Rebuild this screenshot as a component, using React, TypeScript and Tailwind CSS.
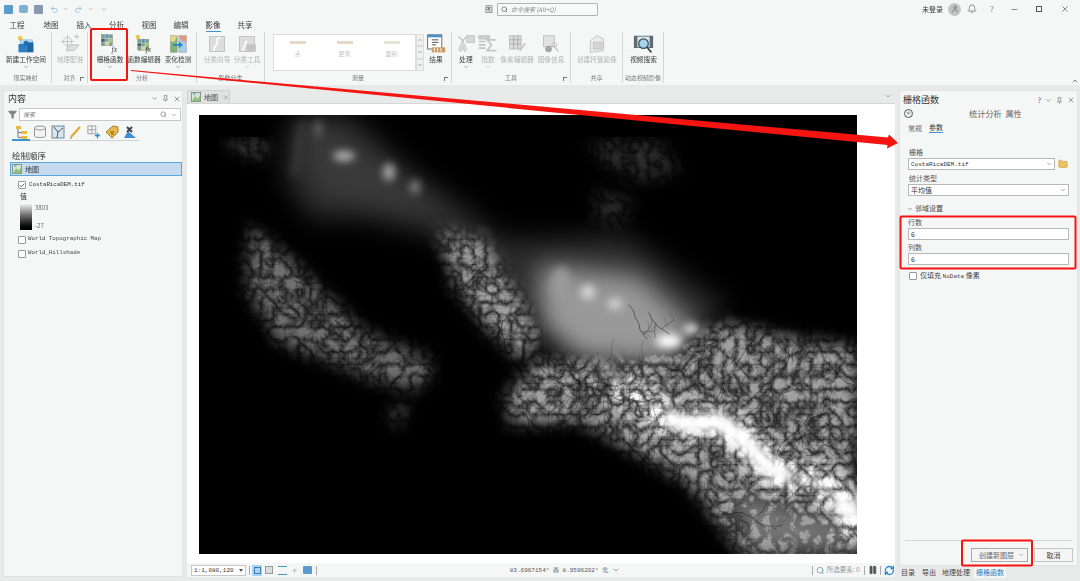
import { useMemo } from "react";
import { ChevronDown, ChevronUp, Pin, Search, X, Minus, Bell, Undo2, Redo2, Filter, Pause, RefreshCw, ArrowLeft, Check, Folder, User } from "lucide-react";

const mono = "font-['Liberation_Mono',monospace]";

// simple seeded random so the drainage lines stay the same on each render
function makeRandom(seed: number) {
  let s = seed;
  return () => {
    s = (s * 16807) % 2147483647;
    return s / 2147483647;
  };
}

function buildRivers() {
  const rnd = makeRandom(4242);
  const out: { d: string; w: number }[] = [];
  const grow = (x: number, y: number, a: number, len: number, depth: number) => {
    let cx = x;
    let cy = y;
    let ang = a;
    let d = `M${cx.toFixed(1)} ${cy.toFixed(1)}`;
    const steps = Math.max(3, Math.round(len / 3));
    for (let i = 0; i < steps; i++) {
      ang += (rnd() - 0.5) * 0.8;
      cx += Math.cos(ang) * 3;
      cy += Math.sin(ang) * 3;
      d += `L${cx.toFixed(1)} ${cy.toFixed(1)}`;
      if (depth > 0 && rnd() < 0.3) {
        const side = rnd() < 0.5 ? -1 : 1;
        grow(cx, cy, ang + side * (0.6 + rnd() * 0.6), len * (0.3 + rnd() * 0.25), depth - 1);
      }
    }
    out.push({ d, w: 0.3 + depth * 0.25 });
  };
  const trunks: [number, number, number, number][] = [
    [655, 330, 3.0, 60], [655, 270, 3.3, 60], [590, 235, 1.9, 60], [555, 225, 1.9, 70], [520, 225, 2.3, 50],
    [425, 268, 3.1, 55], [340, 250, 1.2, 45], [375, 262, 0.8, 90], [440, 345, 0.7, 60],
    [610, 300, 2.2, 50], [515, 385, 0.9, 60], [430, 190, 1.1, 38], [450, 198, 1.3, 30],
    [310, 200, 2.5, 40], [285, 150, 2.2, 35], [95, 165, 1.0, 45], [135, 205, 0.6, 40], [320, 290, 1.4, 26],
  ];
  trunks.forEach(([x, y, a, l]) => grow(x, y, a, l, 2));
  return out;
}

function DemMap() {
  const rivers = useMemo(buildRivers, []);
  const glow: [number, number, number, number, string][] = [
    [119, 14, 4, 9, "#666"], [145, 41, 11, 5, "#bbb"], [190, 57, 6, 9, "#aaa"], [216, 72, 5, 7, "#888"],
    [286, 117, 2, 2, "#aaa"], [362, 168, 10, 16, "#999"], [389, 177, 7, 7, "#ddd"], [416, 189, 7, 5, "#ddd"],
    [470, 226, 13, 7, "#fff"], [492, 214, 8, 5, "#eee"],
  ];
  return (
    <svg viewBox="0 0 658 439" className="block w-[658px] h-[439px] bg-black">
      <defs>
        <filter id="wide" x="-20%" y="-20%" width="140%" height="140%" colorInterpolationFilters="sRGB">
          <feGaussianBlur stdDeviation="13" />
        </filter>
        <filter id="soft" x="-20%" y="-20%" width="140%" height="140%" colorInterpolationFilters="sRGB">
          <feGaussianBlur stdDeviation="4" />
        </filter>
        <filter id="dem" x="0" y="0" width="100%" height="100%" colorInterpolationFilters="sRGB">
          <feGaussianBlur stdDeviation="8" result="b" />
          <feTurbulence type="turbulence" baseFrequency="0.08" numOctaves="4" seed="23" result="n" />
          <feColorMatrix in="n" type="matrix" values="1.5 0 0 0 0.12 1.5 0 0 0 0.12 1.5 0 0 0 0.12 0 0 0 0 1" result="g" />
          <feComposite in="b" in2="g" operator="arithmetic" k1="0.95" k2="0.05" k3="0" k4="0" />
          <feGaussianBlur stdDeviation="0.4" />
        </filter>
      </defs>
      <g filter="url(#wide)">
        <polygon points="92,0 150,0 208,53 269,96 303,125 345,125 425,119 529,193 468,239 381,226 321,186 234,119 164,103 112,103 85,63" fill="#2c2c2c" />
        <polygon points="100,15 125,10 190,50 250,100 200,95 120,80" fill="#3a3a3a" />
        <polygon points="340,150 440,160 500,215 470,250 380,245 340,210" fill="#999" />
        <polygon points="510,355 565,380 658,405 658,439 552,439" fill="#777" />
      </g>
      <g filter="url(#soft)">
        <polygon points="100,4 108,10 100,60 92,60" fill="#383838" />
        {glow.map(([cx, cy, rx, ry, fill], i) => (
          <ellipse key={i} cx={cx} cy={cy} rx={rx} ry={ry} fill={fill} />
        ))}
      </g>
      <g filter="url(#dem)" style={{ mixBlendMode: "lighten" }}>
        <polygon points="52,109 91,143 164,216 234,246 225,273 182,269 78,226 47,173" fill="#707070" />
        <polygon points="20,28 50,22 75,32 60,45 40,36" fill="#484848" />
        <polygon points="385,25 465,25 480,60 440,66 405,50" fill="#2c2c2c" />
        <polygon points="395,75 440,85 420,110 395,105" fill="#282828" />
        <polygon points="190,290 212,290 200,312 192,308" fill="#484848" />
        <polygon points="240,115 285,125 325,190 342,225 320,245 290,215 255,170" fill="#a0a0a0" />
        <polygon points="308,279 340,245 425,245 529,208 598,224 658,232 658,439 545,439 490,369 385,308 310,308" fill="#a0a0a0" />
        <polyline points="420,265 468,306 520,306 550,329 576,359 620,366 650,389 658,425" fill="none" stroke="#fff" strokeWidth="34" strokeLinejoin="round" />
      </g>
      <g filter="url(#soft)" style={{ mixBlendMode: "lighten" }}>
        <polyline points="465,302 490,310 520,306 550,330 568,352 590,362" fill="none" stroke="#fff" strokeWidth="17" strokeLinejoin="round" />
        <polyline points="590,362 620,368 640,385" fill="none" stroke="#ddd" strokeWidth="6" opacity="0.8" />
        <polyline points="400,245 430,275" fill="none" stroke="#aaa" strokeWidth="8" opacity="0.7" />
        <polyline points="638,385 658,402" fill="none" stroke="#fff" strokeWidth="20" />
      </g>
      <g fill="none" stroke="#000" strokeLinecap="round" opacity="0.55">
        {rivers.map((r, i) => (
          <path key={i} d={r.d} strokeWidth={r.w} />
        ))}
      </g>
    </svg>
  );
}

function Annotations() {
  return (
    <svg viewBox="0 0 1080 581" className="absolute inset-0 w-[1080px] h-[581px] pointer-events-none">
      <g fill="none" stroke="#f5140f" strokeWidth="2">
        <rect x="91" y="29" width="36" height="51" rx="1" />
        <rect x="900.5" y="216.5" width="175" height="52" rx="1" />
        <rect x="962" y="540.5" width="70" height="25" rx="1" />
      </g>
      <polygon points="131,70 888,137.5 889,134.5 898,143 887,148.5 887.5,145 131,71" fill="#f5140f" />
    </svg>
  );
}

// ribbon icons
function WorkspaceIcon() {
  return (
    <svg viewBox="0 0 24 24" className="w-[20px] h-[20px]">
      <circle cx="5" cy="5" r="3" fill="#f2c94c" />
      <rect x="5" y="7" width="15" height="6" fill="#bcd7ee" stroke="#7aa9cf" strokeWidth=".6" />
      <rect x="3" y="12" width="10" height="10" fill="#2d7fc1" />
      <rect x="13" y="10" width="8" height="12" fill="#1f66a6" />
      <circle cx="12" cy="11" r="3" fill="#1d70b8" />
    </svg>
  );
}
function GridFx({ small }: { small?: boolean }) {
  return (
    <svg viewBox="0 0 26 26" className="w-[20px] h-[20px]">
      {small && <circle cx="5" cy="4" r="3" fill="#efc94c" />}
      <g transform={small ? "translate(5,7)" : "translate(2,1)"}>
        <rect width="14" height="14" fill="#7aa08a" stroke="#666" strokeWidth=".5" />
        <rect x="5" y="0" width="4.5" height="4.5" fill="#5b8fc1" />
        <rect x="0" y="5" width="4.5" height="4.5" fill="#3e5a74" />
        <rect x="9.5" y="5" width="4.5" height="4.5" fill="#a8c26e" />
        <rect x="5" y="9.5" width="4.5" height="4.5" fill="#d0d79b" />
        <path d="M0 4.7H14M0 9.4H14M4.7 0V14M9.4 0V14" stroke="#fff" strokeWidth=".5" />
      </g>
      <text x="15" y="23" fontSize="10" fontStyle="italic" fill="#444" fontFamily="Liberation Serif, serif">fx</text>
    </svg>
  );
}
function ChangeIcon() {
  return (
    <svg viewBox="0 0 24 24" className="w-[20px] h-[20px]">
      <path d="M3 2H11V22H3Z" fill="#7fb574" stroke="#777" strokeWidth=".5" />
      <path d="M3 2H11L8 9H3Z" fill="#e7d68a" />
      <path d="M13 2H22V22H13Z" fill="#a9cfe6" stroke="#777" strokeWidth=".5" />
      <path d="M13 2H22V9H17Z" fill="#e39a79" />
      <path d="M6 12H13V9L18 13L13 17V14H6Z" fill="#1e88d2" />
    </svg>
  );
}
function GreyBox({ kind }: { kind: number }) {
  return (
    <svg viewBox="0 0 24 24" className="w-[20px] h-[20px]" fill="none" stroke="#c4c4c4" strokeWidth="1.2">
      {kind === 0 && (
        <>
          <circle cx="9" cy="9" r="5" />
          <path d="M9 1V17M1 9H17M17 3H23M20 0V6" />
          <path d="M8 17L14 13H23L17 20H8Z" fill="#dedede" />
        </>
      )}
      {kind === 1 && (
        <>
          <rect x="3" y="3" width="18" height="18" fill="#ddd" />
          <path d="M8 20C8 14 15 12 12 8C11 6 13 5 16 4" stroke="#fff" strokeWidth="2" />
        </>
      )}
      {kind === 2 && (
        <>
          <rect x="3" y="3" width="18" height="18" fill="#ddd" />
          <path d="M7 20C7 14 12 13 11 8" stroke="#fff" strokeWidth="2" />
          <rect x="12" y="13" width="10" height="7" fill="#c4c4c4" />
        </>
      )}
      {kind === 3 && (
        <>
          <path d="M8 8L3 19L6 21L8 14L10 21L13 19Z" fill="#e2e2e2" />
          <path d="M3 3L9 9M13 3L7 9" strokeWidth="1.6" />
          <rect x="13" y="2" width="9" height="8" fill="#cfe0d0" />
        </>
      )}
      {kind === 4 && (
        <>
          <path d="M1 2H14V6H1Z" fill="#ccc" />
          <path d="M21 7H11L16 13L11 20H22" strokeWidth="2" />
          <path d="M1 9H9M1 13H9M1 17H9" strokeWidth="2" />
        </>
      )}
      {kind === 5 && (
        <>
          <rect x="3" y="2" width="14" height="16" fill="#ddd" />
          <path d="M3 7H17M3 12H17M8 2V18M13 2V18" stroke="#aaa" />
          <path d="M15 20L22 11" strokeWidth="2" />
        </>
      )}
      {kind === 6 && (
        <>
          <rect x="3" y="2" width="13" height="13" fill="#e2e2e2" />
          <circle cx="9" cy="18" r="4" fill="#a5a5a5" stroke="none" />
          <path d="M15 14L21 21" strokeWidth="1.6" />
          <circle cx="16" cy="13" r="3" />
        </>
      )}
      {kind === 7 && (
        <>
          <path d="M4 8L12 2L20 6V20L4 22Z" fill="#ebebeb" />
          <rect x="8" y="10" width="10" height="8" fill="#d5d5d5" />
        </>
      )}
    </svg>
  );
}
function ResultIcon() {
  return (
    <svg viewBox="0 0 24 24" className="w-[20px] h-[20px]">
      <rect x="2" y="1" width="17" height="17" fill="#fff" stroke="#555" />
      <rect x="2" y="1" width="17" height="3" fill="#4a90c8" />
      <path d="M7 7H15M7 10H15M7 13H12" stroke="#555" strokeWidth="1.2" />
      <rect x="7" y="16" width="16" height="6" fill="#c69a60" />
      <path d="M10 17V21M14 17V21M18 17V21" stroke="#fff" strokeWidth="1.2" />
    </svg>
  );
}
function VideoIcon() {
  return (
    <svg viewBox="0 0 24 24" className="w-[21px] h-[21px]">
      <rect x="1" y="2" width="22" height="14" fill="#5f6b72" />
      <rect x="5" y="3" width="14" height="12" fill="#d9e7f0" />
      <circle cx="12" cy="11" r="5.5" fill="#a6d4ef" stroke="#3f4a50" strokeWidth="1.4" />
      <path d="M16 15L21 21" stroke="#3f4a50" strokeWidth="2" />
    </svg>
  );
}

function RibbonButton({ w, label, icon, menu, off }: { w: number; label: string; icon: React.ReactNode; menu?: boolean; off?: boolean }) {
  return (
    <div className="flex flex-col items-center shrink-0" style={{ width: w }}>
      <div className="h-[20px] flex items-center justify-center">{icon}</div>
      <span className={`text-[6.7px] leading-[10px] whitespace-nowrap ${off ? "text-[#b4b4b4]" : "text-[#3c3c3c]"}`}>{label}</span>
      {menu && <ChevronDown className={off ? "text-[#aaa]" : "text-[#666]"} size={6} strokeWidth={2} />}
    </div>
  );
}

function RibbonGroup({ width, label, children, pad = 0, launcher }: { width: number; label: string; children: React.ReactNode; pad?: number; launcher?: boolean }) {
  return (
    <div className="relative flex flex-col shrink-0 h-[51px] border-r border-[#d5d7d7]" style={{ width }}>
      <div className="flex-1 flex pt-[2px]" style={{ paddingLeft: pad }}>
        {children}
      </div>
      <div className="h-[11px] text-center text-[6px] leading-[11px] text-[#777] whitespace-nowrap">{label}</div>
      {launcher && <div className="absolute right-[3px] bottom-[2px] w-[4px] h-[4px] border-l border-t border-[#777]" />}
    </div>
  );
}

function TitleBar() {
  return (
    <div className="h-[18px] flex items-center bg-[#f5f7f7] shrink-0">
      <div className="flex items-center gap-[5px] pl-[4px] w-[108px] text-[#8ab4dc]">
        <span className="w-[9px] h-[9px] bg-[#5a9ccc] rounded-[1px]" />
        <span className="ml-[1px] w-[10px] h-[8px] bg-[#7fb0d2] rounded-[2px]" />
        <span className="ml-[1px] w-[9px] h-[9px] bg-[#8899ad] rounded-[1px]" />
        <Undo2 className="ml-[2px]" size={9} />
        <ChevronDown className="text-[#888]" size={6} />
        <Redo2 size={9} />
        <ChevronDown className="text-[#888]" size={6} />
        <ChevronDown className="text-[#888] ml-[3px]" size={7} />
      </div>
      <span className="ml-[373px] w-[16px] text-center text-[8px] text-[#555]">图</span>
      <div className="w-[101px] h-[13px] flex items-center gap-[3px] px-[3px] bg-[#f8f9f9] border border-[#b5b5b5] rounded-[1px]">
        <Search className="text-[#444]" size={7} />
        <span className="text-[6px] italic text-[#888]">命令搜索 (Alt+Q)</span>
      </div>
      <span className="ml-[324px] w-[21px] text-[7px] text-[#333] whitespace-nowrap">未登录</span>
      <span className="ml-[5px] w-[13px] h-[13px] rounded-full bg-[#c4c6c6] flex items-center justify-center">
        <User className="text-[#666]" size={8} />
      </span>
      <Bell className="ml-[6px] text-[#777]" size={10} />
      <span className="ml-[13px] text-[8px] text-[#888]">?</span>
      <Minus className="ml-[16px] text-[#666]" size={9} />
      <span className="ml-[17px] w-[6px] h-[6px] border border-[#555]" />
      <X className="ml-[18px] text-[#777]" size={10} />
    </div>
  );
}

const tabs = ["工程", "地图", "插入", "分析", "视图", "编辑", "影像", "共享"];

function MenuTabs() {
  return (
    <div className="h-[14px] grid grid-cols-[34px_34px_32px_33px_32px_32px_32px_32px] bg-[#f5f7f7] shrink-0">
      {tabs.map((t, i) => (
        <div key={t} className="flex justify-center">
          <span className={`text-[7.5px] leading-[13px] whitespace-nowrap ${i === 6 ? "text-[#333] border-b-2 border-[#3b93d0]" : "text-[#3c3c3c]"}`}>{t}</span>
        </div>
      ))}
    </div>
  );
}

function Gallery() {
  return (
    <div className="flex h-[37px] w-[151px] shrink-0">
      <div className="w-[143px] h-full flex bg-white border border-[#dcdcdc]">
        {[["点", "#e9d8c6"], ["距离", "#e9d8c6"], ["面积", "#dfe6d4"]].map(([t, c]) => (
          <div key={t} className="w-[47px] flex flex-col items-center pt-[6px]">
            <span className="w-[16px] h-[8px] border-t-[3px]" style={{ borderColor: c }} />
            <span className="text-[6px] leading-[9px] text-[#c4c4c4]">{t}</span>
          </div>
        ))}
      </div>
      <div className="w-[8px] flex flex-col text-[#666]">
        {[<ChevronUp key="u" size={6} />, <ChevronDown key="d" size={6} />, <ChevronDown key="m" size={6} />].map((ic) => (
          <span key={ic.key} className="flex-1 flex items-center justify-center bg-[#f0f0f0] border border-[#dcdcdc]">{ic}</span>
        ))}
      </div>
    </div>
  );
}

function Ribbon() {
  return (
    <div className="relative h-[53px] flex bg-[#f5f7f7] shrink-0">
      <RibbonGroup width={52} label="现实映射">
        <RibbonButton w={52} label="新建工作空间" icon={<WorkspaceIcon />} menu />
      </RibbonGroup>
      <RibbonGroup width={36} label="对齐" launcher>
        <RibbonButton w={36} label="地理配准" icon={<GreyBox kind={0} />} off />
      </RibbonGroup>
      <RibbonGroup width={109} label="分析" pad={5}>
        <RibbonButton w={34} label="栅格函数" icon={<GridFx />} menu />
        <RibbonButton w={34} label="函数编辑器" icon={<GridFx small />} />
        <RibbonButton w={34} label="变化检测" icon={<ChangeIcon />} menu />
      </RibbonGroup>
      <RibbonGroup width={68} label="影像分类" pad={5}>
        <RibbonButton w={30} label="分类向导" icon={<GreyBox kind={1} />} off />
        <RibbonButton w={30} label="分类工具" icon={<GreyBox kind={2} />} off menu />
      </RibbonGroup>
      <RibbonGroup width={187} label="测量" pad={8} launcher>
        <Gallery />
        <RibbonButton w={24} label="结果" icon={<ResultIcon />} />
      </RibbonGroup>
      <RibbonGroup width={119} label="工具" pad={3} launcher>
        <RibbonButton w={22} label="处理" icon={<GreyBox kind={3} />} menu />
        <RibbonButton w={22} label="指数" icon={<GreyBox kind={4} />} off menu />
        <RibbonButton w={36} label="像素编辑器" icon={<GreyBox kind={5} />} off />
        <RibbonButton w={32} label="图像信息" icon={<GreyBox kind={6} />} off />
      </RibbonGroup>
      <RibbonGroup width={52} label="共享">
        <RibbonButton w={52} label="创建托管影像" icon={<GreyBox kind={7} />} off />
      </RibbonGroup>
      <RibbonGroup width={41} label="动态视频影像">
        <RibbonButton w={41} label="视频搜索" icon={<VideoIcon />} />
      </RibbonGroup>
      <ChevronUp className="absolute right-[1px] bottom-[0px] text-[#444]" size={8} />
    </div>
  );
}

function CheckBox({ checked }: { checked?: boolean }) {
  return (
    <span className="w-[8px] h-[8px] shrink-0 flex items-center justify-center bg-white border border-[#9a9a9a] rounded-[1px]">
      {checked && <Check className="text-[#333]" size={7} strokeWidth={3} />}
    </span>
  );
}

function PanelControls() {
  return (
    <div className="flex items-center gap-[4px] text-[#666]">
      <ChevronDown size={7} />
      <Pin size={7} />
      <X size={8} />
    </div>
  );
}

function MapThumb() {
  return (
    <svg viewBox="0 0 12 12" className="w-[10px] h-[10px] shrink-0">
      <rect x=".5" y=".5" width="11" height="11" fill="#d5e5cf" stroke="#7a8a80" />
      <path d="M1 11L5 5L8 8L11 4V11Z" fill="#8fbf7a" />
      <path d="M2 1H6L4 4Z" fill="#6fa0c9" />
    </svg>
  );
}

function ContentsIcons() {
  return (
    <div className="flex items-center h-[15px] ml-[7px] gap-[4px] mt-[3px]">
      <svg viewBox="0 0 14 14" className="w-[14px] h-[14px]" fill="none" stroke="#777">
        <rect x="1" y="1" width="5" height="3" fill="#e9b93f" stroke="none" />
        <rect x="6" y="6" width="6" height="3" fill="#e9b93f" stroke="none" />
        <rect x="6" y="11" width="6" height="3" fill="#e9b93f" stroke="none" />
        <path d="M3 4V12.5H6M3 7.5H6" />
      </svg>
      <svg viewBox="0 0 14 14" className="w-[14px] h-[14px]" fill="#f3f3f3" stroke="#999">
        <path d="M1.5 3V11C1.5 13 12.5 13 12.5 11V3" />
        <ellipse cx="7" cy="3" rx="5.5" ry="2" />
      </svg>
      <svg viewBox="0 0 14 14" className="w-[14px] h-[14px]">
        <rect x="1" y="1" width="12" height="12" fill="#d8e6f1" stroke="#6f8797" />
        <path d="M3 2L7 7L6 13M7 7L12 3" fill="none" stroke="#555" />
      </svg>
      <svg viewBox="0 0 14 14" className="w-[14px] h-[14px]">
        <path d="M2 12L11 2" stroke="#e0a92c" strokeWidth="2.2" />
        <path d="M2 12L1 14L3 13Z" fill="#555" />
      </svg>
      <svg viewBox="0 0 16 16" className="w-[14px] h-[14px]" fill="none">
        <path d="M1 1H10V10H1ZM5.5 1V10M1 5.5H10" stroke="#999" />
        <path d="M12 9V15M9 12H15" stroke="#2a8ad0" strokeWidth="1.6" />
      </svg>
      <svg viewBox="0 0 14 14" className="w-[14px] h-[14px]">
        <path d="M1 7L8 1L13 2L13 7L7 13Z" fill="#e8b84a" stroke="#a87f2a" />
        <path d="M5 7H9M6 9H9" stroke="#7a5a1a" />
      </svg>
      <svg viewBox="0 0 14 14" className="w-[14px] h-[14px]">
        <path d="M1 13L5 6L13 13Z" fill="#3f8fd0" />
        <path d="M4 2L9 7M9 2L4 7" stroke="#444" strokeWidth="2" />
      </svg>
    </div>
  );
}

function ContentsPanel() {
  return (
    <div className="w-[180px] shrink-0 h-[487px] bg-[#f5f7f7] border border-[#e2e4e4] pl-[4px]">
      <div className="h-[15px] flex items-center justify-between pr-[1px]">
        <span className="text-[9px] leading-[14px] text-[#333]">内容</span>
        <PanelControls />
      </div>
      <div className="flex items-center mt-[2px] pr-[1px]">
        <Filter className="text-[#777] fill-[#888] shrink-0" size={9} />
        <div className="ml-[2px] flex-1 h-[13px] flex items-center justify-between px-[3px] bg-white border border-[#c8c8c8]">
          <span className="text-[6px] italic text-[#777]">搜索</span>
          <span className="flex items-center gap-[4px] text-[#666]"><Search size={7} /><ChevronDown size={6} /></span>
        </div>
      </div>
      <ContentsIcons />
      <div className="w-[127px] ml-[4px] h-[1px] bg-[#cfd2d2] mt-[1px] relative">
        <div className="absolute left-0 top-[-1px] w-[18px] h-[2px] bg-[#3b93d0]" />
      </div>
      <div className="ml-[4px] mt-[8px] text-[8.5px] leading-[13px] text-[#333]">绘制顺序</div>
      <div className="ml-[2px] w-[172px] h-[14px] flex items-center gap-[2px] pl-[1px] bg-[#c5dbee] border border-[#5aa8dd]">
        <MapThumb />
        <span className="ml-[1px] text-[7px] text-[#333]">地图</span>
      </div>
      <div className="ml-[10px] mt-[3px] h-[12px] flex items-center gap-[3px]">
        <CheckBox checked />
        <span className={`${mono} text-[5.8px] text-[#333]`}>CostaRicaDEM.tif</span>
      </div>
      <div className="ml-[12px] text-[7px] leading-[10px] text-[#333]">值</div>
      <div className="ml-[12px] mt-[3px] flex h-[26px]">
        <div className="w-[12px] bg-gradient-to-b from-[#f0f0f0] to-black" />
        <div className="ml-[3px] flex flex-col justify-between text-[6px] leading-[8px] text-[#666]">
          <span>3803</span>
          <span>-27</span>
        </div>
      </div>
      <div className="ml-[10px] mt-[4px] h-[11px] flex items-center gap-[2px]">
        <CheckBox />
        <span className={`${mono} text-[5.8px] text-[#444]`}>World Topographic Map</span>
      </div>
      <div className="ml-[10px] mt-[3px] h-[11px] flex items-center gap-[2px]">
        <CheckBox />
        <span className={`${mono} text-[5.8px] text-[#444]`}>World_Hillshade</span>
      </div>
    </div>
  );
}

function StatusBar() {
  return (
    <div className="h-[14px] flex items-center bg-[#f5f7f7] text-[#666]">
      <div className={`ml-[4px] w-[56px] h-[11px] flex items-center justify-between px-[2px] bg-white border border-[#c8c8c8] ${mono} text-[6px] text-[#333]`}>
        <span>1:1,080,120</span>
        <span className="w-0 h-0 border-x-[2px] border-t-[3px] border-x-transparent border-t-[#555]" />
      </div>
      <span className="ml-[3px] w-px h-[9px] bg-[#aaa]" />
      <span className="ml-[2px] w-[11px] h-[11px] bg-[#a9d3f2] flex items-center justify-center">
        <span className="w-[7px] h-[7px] border border-[#3b7fb5]" />
      </span>
      <span className="ml-[3px] w-[8px] h-[8px] border border-[#999] bg-[#ddd]" />
      <span className="ml-[5px] w-[9px] h-[9px] border-y border-[#3a9bb5]" />
      <span className="ml-[5px] text-[9px] leading-[9px] text-[#8fb37a]">+</span>
      <span className="ml-[6px] w-[9px] h-[8px] bg-[#5a9ad0] rounded-[1px]" />
      <span className="ml-[4px] w-px h-[9px] bg-[#aaa]" />
      <span className={`ml-[193px] ${mono} text-[6px] text-[#555] whitespace-nowrap`}>83.6967154° 西 8.9596202° 北</span>
      <ChevronDown className="ml-[4px]" size={8} />
      <span className="ml-[192px] w-px h-[9px] bg-[#aaa]" />
      <Search className="ml-[3px] text-[#6a93b5]" size={9} />
      <span className="ml-[2px] text-[6.5px] text-[#999] whitespace-nowrap">所选要素: 0</span>
      <span className="ml-[4px] w-px h-[9px] bg-[#aaa]" />
      <Pause className="ml-[3px] text-[#555] fill-[#555]" size={10} />
      <span className="ml-[3px] w-px h-[9px] bg-[#aaa]" />
      <RefreshCw className="ml-[3px] text-[#2a8ad0]" size={11} strokeWidth={3} />
    </div>
  );
}

function MapPane() {
  return (
    <div className="w-[708px] shrink-0 h-[487px] flex flex-col">
      <div className="h-[13px] flex items-end justify-between bg-[#e8e9e9] pr-[3px]">
        <div className="w-[43px] h-[13px] flex items-center gap-[3px] pl-[3px] bg-[#e0e2e2] border-t border-x border-[#d0d0d0]">
          <MapThumb />
          <span className="text-[7px] text-[#444] whitespace-nowrap">地图</span>
          <X className="ml-[2px] text-[#777]" size={7} />
        </div>
        <ChevronDown className="text-[#888] mb-[3px]" size={8} />
      </div>
      <div className="h-[460px] bg-white pl-[12px] pt-[11px] border-t border-[#d5d7d7]">
        <DemMap />
      </div>
      <StatusBar />
    </div>
  );
}

function Field({ value, width, menu, fontClass }: { value: string; width: string; menu?: boolean; fontClass?: string }) {
  return (
    <div className={`${width} h-[12px] flex items-center justify-between px-[2px] bg-white border border-[#b8b8b8]`}>
      <span className={`text-[7px] text-[#333] ${fontClass ?? ""}`}>{value}</span>
      {menu && <ChevronDown className="text-[#555]" size={6} />}
    </div>
  );
}

function RasterPanel() {
  return (
    <div className="w-[179px] shrink-0 flex flex-col h-[489px]">
      <div className="h-[476px] bg-[#f5f7f7] border border-[#e2e4e4] pl-[3px] pr-[1px] relative">
        <div className="h-[14px] flex items-center justify-between mt-[2px] pr-[1px]">
          <span className="text-[9px] leading-[14px] text-[#333]">栅格函数</span>
          <div className="flex items-center gap-[4px] text-[#555]">
            <span className="text-[7px] leading-[8px]">?</span>
            <PanelControls />
          </div>
        </div>
        <div className="h-[12px] flex items-center relative">
          <span className="ml-[1px] w-[9px] h-[9px] rounded-full border border-[#555] flex items-center justify-center">
            <ArrowLeft className="text-[#444]" size={6} />
          </span>
          <span className="absolute left-[66px] text-[8.2px] text-[#666] whitespace-nowrap">统计分析&nbsp;&nbsp;属性</span>
        </div>
        <div className="flex items-end h-[12px] mt-[2px] ml-[5px] text-[7px]">
          <span className="text-[#666]">常规</span>
          <span className="ml-[7px] text-[#333] border-b border-[#3b93d0] leading-[10px]">参数</span>
        </div>
        <div className="ml-[6px] mt-[14px] text-[7px] leading-[10px] text-[#555]">栅格</div>
        <div className="ml-[5px] mt-[1px] flex items-center gap-[3px]">
          <Field value="CostaRicaDEM.tif" width="w-[147px]" menu fontClass={`${mono} !text-[6px]`} />
          <Folder className="text-[#d8a73a] fill-[#e8c468]" size={10} />
        </div>
        <div className="ml-[6px] mt-[3px] text-[7px] leading-[10px] text-[#555]">统计类型</div>
        <div className="ml-[5px] mt-[1px]">
          <Field value="平均值" width="w-[161px]" menu />
        </div>
        <div className="ml-[4px] mt-[7px] flex items-center gap-[2px] text-[7px] leading-[11px] text-[#444]">
          <ChevronDown size={6} />
          <span>邻域设置</span>
        </div>
        <div className="ml-[5px] mt-[3px] text-[7px] leading-[10px] text-[#555]">行数</div>
        <div className="ml-[5px] mt-[1px]"><Field value="6" width="w-[161px]" /></div>
        <div className="ml-[5px] mt-[2px] text-[7px] leading-[10px] text-[#555]">列数</div>
        <div className="ml-[5px] mt-[1px]"><Field value="6" width="w-[161px]" /></div>
        <div className="ml-[6px] mt-[5px] flex items-center gap-[3px] text-[7px] text-[#444]">
          <CheckBox />
          <span>仅填充 <span className={`${mono} text-[6px]`}>NoData</span> 像素</span>
        </div>
        <div className="absolute left-[5px] right-[5px] bottom-[24px] h-px bg-[#d5d7d7]" />
        <div className="absolute right-[4px] bottom-[3px] flex gap-[6px]">
          <div className="w-[57px] h-[14px] flex items-center justify-between pl-[7px] pr-[3px] bg-[#f5f5f5] border border-[#aaa] text-[7px] text-[#666]">
            <span>创建新图层</span>
            <ChevronDown size={6} />
          </div>
          <div className="w-[39px] h-[14px] flex items-center justify-center bg-[#f5f5f5] border border-[#c5c5c5] text-[7px] text-[#444]">取消</div>
        </div>
      </div>
      <div className="h-[13px] flex items-center pl-[2px] text-[7px] text-[#444] bg-[#e8e9e9]">
        <span className="w-[14px]">目录</span>
        <span className="ml-[7px] w-[14px]">导出</span>
        <span className="ml-[6px] w-[28px]">地理处理</span>
        <span className="ml-[4px] w-[32px] h-[11px] leading-[11px] text-center bg-[#f5f7f7] text-[#2a80c0]">栅格函数</span>
      </div>
    </div>
  );
}

export default function App() {
  return (
    <div className="relative w-[1080px] h-[581px] overflow-hidden flex flex-col bg-[#e8e9e9] font-['Noto_Sans_CJK_SC','Liberation_Sans',sans-serif]">
      <TitleBar />
      <MenuTabs />
      <Ribbon />
      <div className="flex pl-[3px] pt-[5px] gap-[4px]">
        <ContentsPanel />
        <MapPane />
        <RasterPanel />
      </div>
      <Annotations />
    </div>
  );
}
